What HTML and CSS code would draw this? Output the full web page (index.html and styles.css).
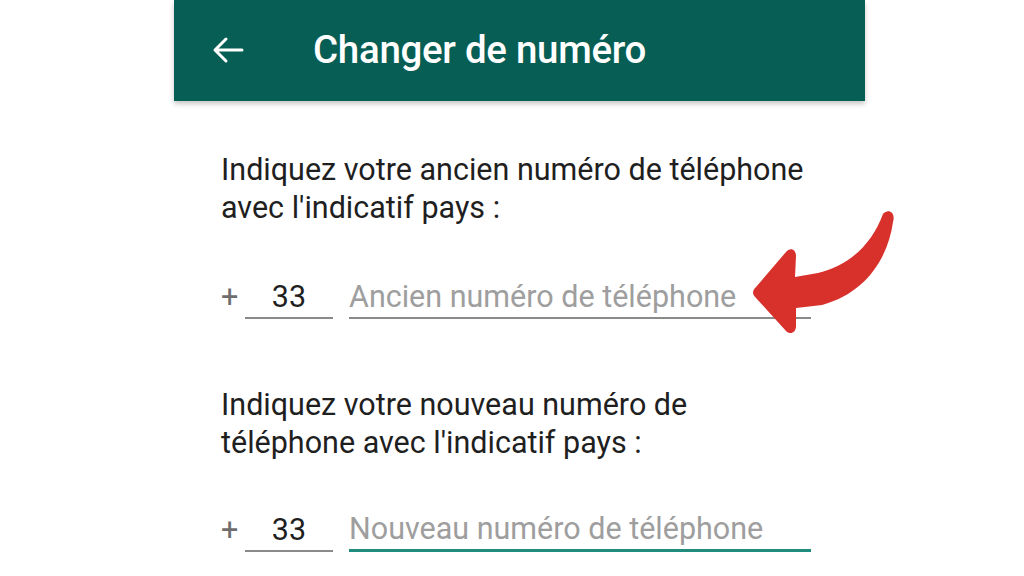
FILE: index.html
```html
<!DOCTYPE html>
<html lang="fr">
<head>
<meta charset="utf-8">
<link rel="stylesheet" href="styles.css">
</head>
<body>
<div class="screen">
  <header class="appbar">
    <svg class="back" width="32" height="28" viewBox="0 0 32 28">
      <path d="M30 14 H3 M14 3 L3 14 L14 25" fill="none" stroke="#fff" stroke-width="3" stroke-linecap="round" stroke-linejoin="round"/>
    </svg>
    <h1 class="title">Changer de numéro</h1>
  </header>
  <main class="content">
    <section class="block">
      <p class="label">Indiquez votre ancien numéro de téléphone avec l'indicatif pays :</p>
      <div class="row">
        <span class="plus">+</span>
        <span class="code">33</span>
        <span class="phone">Ancien numéro de téléphone</span>
      </div>
    </section>
    <section class="block second">
      <p class="label">Indiquez votre nouveau numéro de téléphone avec l'indicatif pays :</p>
      <div class="row">
        <span class="plus">+</span>
        <span class="code">33</span>
        <span class="phone focus">Nouveau numéro de téléphone</span>
      </div>
    </section>
  </main>
  <svg class="pointer" width="160" height="135" viewBox="740 205 160 135">
    <path d="M883 214 C888 208 896 212 893 222 C888 258 866 293 822 305 L796 308 L796 326 C796 333 790 335 786 331 L756 298 C752 294 752 291 756 287 L786 252 C790 247 796 249 796 256 L795 277 L818 273 C850 265 872 244 883 214 Z" fill="#d8312b"/>
  </svg>
</div>
</body>
</html>
```
FILE: styles.css
```css
html, body {
  margin: 0;
  padding: 0;
  background: #ffffff;
}
body {
  width: 1024px;
  height: 576px;
  overflow: hidden;
  font-family: Roboto, "Liberation Sans", sans-serif;
}
.screen {
  position: relative;
  width: 691px;
  height: 576px;
  margin-left: 174px;
}
.appbar {
  height: 101px;
  background: #075e54;
  display: flex;
  align-items: center;
  box-shadow: 0 3px 5px rgba(0, 0, 0, 0.22);
  position: relative;
  z-index: 1;
}
.back {
  margin-left: 38px;
  margin-top: -2px;
}
.title {
  margin: 0 0 0 69px;
  color: #ffffff;
  font-size: 38.5px;
  font-weight: 500;
  letter-spacing: -0.3px;
  line-height: 1;
}
.content {
  padding: 50px 0 0 47px;
}
.label {
  margin: 0;
  width: 600px;
  font-size: 30.5px;
  line-height: 38px;
  color: #1f1f1f;
}
.row {
  display: flex;
  align-items: flex-end;
  margin-top: 50px;
  font-size: 30.5px;
  line-height: 40px;
}
.plus {
  width: 24px;
  color: #6e6e6e;
  padding-bottom: 2px;
}
.code {
  width: 88px;
  text-align: center;
  color: #1f1f1f;
  border-bottom: 2px solid #8a8a8a;
}
.phone {
  margin-left: 16px;
  width: 462px;
  color: #9e9e9e;
  border-bottom: 2px solid #8a8a8a;
  white-space: nowrap;
}
.phone.focus {
  border-bottom: 3px solid #1f8c7d;
}
.second {
  margin-top: 67px;
}
.second .row {
  margin-top: 47px;
}
.pointer {
  position: absolute;
  left: 566px;
  top: 205px;
  z-index: 2;
}
```
